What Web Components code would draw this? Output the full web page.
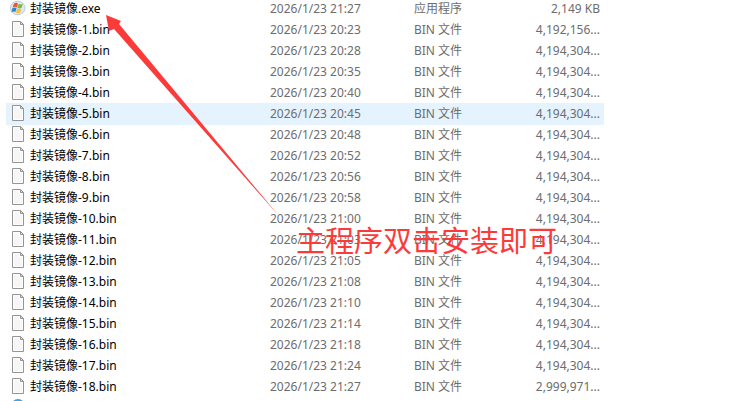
<!DOCTYPE html>
<html lang="zh-CN">
<head>
<meta charset="UTF-8">
<meta name="viewport" content="width=device-width, initial-scale=1.0">
<title>封装镜像</title>
<style>
  body {
    margin: 0;
    background: #fff;
    font-family: "Noto Sans", "Noto Sans CJK SC", sans-serif;
    font-size: 12px;
  }
</style>
</head>
<body>
<file-window>
  <file-list selected="5"></file-list>
  <red-note slot="note">主程序双击安装即可</red-note>
</file-window>

<script>
const ICONS = {
  bin: `
    <path d="M2.5 .5h8l3 3v12h-11z" fill="#f6f6f6" stroke="#949494"/>
    <path d="M3.500 1.500h6v3h3v10h-9z" fill="none" stroke="#fff"/>
    <path d="M10.500 .5v3h3z" fill="#ddd" stroke="#949494" stroke-linejoin="round"/>`,
  exe: `
    <ellipse cx="7.700" cy="8" rx="7.400" ry="6.800" fill="#dde8f0" stroke="#b4c3cf" stroke-width=".8"/>
    <path d="M4 3.600q2-1.500 4-.2l-1.200 4q-2-1.200-4.200.2z" fill="#e8572a"/>
    <path d="M8.600 3.900q2 1 4.200-.2l-1.200 4q-2.200 1.300-4.200.1z" fill="#7bbb3a"/>
    <path d="M2.400 8.200q2.200-1.400 4.200-.2l-1.200 4q-2-1.200-4 .2z" fill="#2f86d0"/>
    <path d="M7.200 8.600q2 1.200 4.200-.1l-1.200 4q-2.200 1.300-4.200.1z" fill="#f8c02c"/>`,
  app: `<circle cx="8" cy="7" r="7" fill="#3fa3e4"/>`
};

class FileIcon extends HTMLElement {
  constructor() {
    super();
    this.attachShadow({ mode: "open" });
    this.shadowRoot.innerHTML = `
      <style>
        :host { display: block; width: 16px; height: 16px; }
        svg { display: block; }
      </style>
      <svg width="16" height="16" viewBox="0 0 16 16" aria-hidden="true">${ICONS[this.getAttribute("kind")] || ICONS.bin}</svg>
    `;
  }
}

class FileList extends HTMLElement {
  constructor() {
    super();
    this.attachShadow({ mode: "open" });
    const times = ["20:23", "20:28", "20:35", "20:40", "20:45", "20:48", "20:52", "20:56", "20:58",
      "21:00", "21:03", "21:05", "21:08", "21:10", "21:14", "21:18", "21:24", "21:27"];
    const files = [
      { kind: "exe", name: "封装镜像.exe", time: "2026/1/23 21:27", type: "应用程序", size: "2,149 KB" }
    ];
    times.forEach((time, i) => {
      const size = i === 0 ? "4,192,156..." : i === 17 ? "2,999,971..." : "4,194,304...";
      files.push({ kind: "bin", name: `封装镜像-${i + 1}.bin`, time: `2026/1/23 ${time}`, type: "BIN 文件", size });
    });
    files.push({ kind: "app", name: "", time: "", type: "", size: "" });

    const selected = parseInt(this.getAttribute("selected"));
    this.shadowRoot.innerHTML = `
      <style>
        :host { display: block; padding: 0 144px 0 6px; margin-top: -2px; }
        table {
          width: 100%;
          table-layout: fixed;
          border-collapse: collapse;
          color: #6d6d6d;
        }
        .date { width: 144px; }
        .type { width: 114px; }
        .size { width: 76px; }
        td {
          height: 21px;
          padding: 0 4px 0 0;
          line-height: 20px;
          white-space: nowrap;
        }
        td:first-child { padding-left: 4px; color: #000; }
        td:last-child { text-align: right; }
        .selected { background: #e5f3ff; box-shadow: 0 1px #e5f3ff; }
        .name { display: flex; align-items: flex-start; gap: 4px; height: 20px; }
        file-icon { margin-top: 1px; }
      </style>
      <table>
        <colgroup><col><col class="date"><col class="type"><col class="size"></colgroup>
        <tbody>
          ${files.map((file, i) => `
            <tr class="${i === selected ? "selected" : ""}">
              <td><div class="name"><file-icon kind="${file.kind}"></file-icon><span>${file.name}</span></div></td>
              <td>${file.time}</td>
              <td>${file.type}</td>
              <td>${file.size}</td>
            </tr>`).join("")}
        </tbody>
      </table>
    `;
  }
}

class RedNote extends HTMLElement {
  constructor() {
    super();
    this.attachShadow({ mode: "open" });
    this.shadowRoot.innerHTML = `
      <style>
        :host {
          position: absolute;
          inset: 0;
          color: #fb3b39;
          pointer-events: none;
        }
        svg { position: absolute; left: 0; top: 0; }
        p {
          position: absolute;
          left: 296px;
          top: 220px;
          margin: 0;
          font-size: 29px;
          line-height: 42px;
          white-space: nowrap;
        }
      </style>
      <svg width="300" height="230" viewBox="0 0 300 230" aria-hidden="true">
        <path d="M106 15L121 21L119 24L279 216L114 29L109 31z" fill="currentColor"/>
      </svg>
      <p><slot></slot></p>
    `;
  }
}

class FileWindow extends HTMLElement {
  constructor() {
    super();
    this.attachShadow({ mode: "open" });
    this.shadowRoot.innerHTML = `
      <style>
        :host {
          display: flow-root;
          position: relative;
          height: 100vh;
          overflow: hidden;
        }
      </style>
      <slot></slot>
      <slot name="note"></slot>
    `;
  }
}

customElements.define("file-icon", FileIcon);
customElements.define("file-list", FileList);
customElements.define("red-note", RedNote);
customElements.define("file-window", FileWindow);
</script>
</body>
</html>
